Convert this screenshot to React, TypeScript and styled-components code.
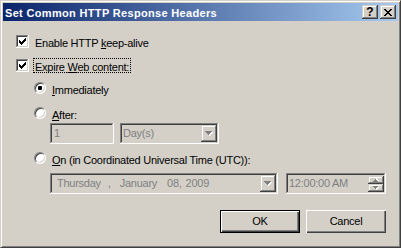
import React from 'react';
import styled, { createGlobalStyle } from 'styled-components';

const GlobalStyle = createGlobalStyle`
  html, body { margin: 0; padding: 0; background: #d4d0c8; }
  body { font-family: "Liberation Sans", Arial, sans-serif; font-size: 11px; }
`;

const raisedPush = `box-shadow: inset 1px 1px #fff, inset -1px -1px #404040, inset -2px -2px #808080;`;
const raisedSmall = `box-shadow: inset -1px -1px #404040, inset 1px 1px #d4d0c8, inset -2px -2px #808080, inset 2px 2px #fff;`;
const sunken = `box-shadow: inset -1px -1px #fff, inset 1px 1px #808080, inset -2px -2px #d4d0c8, inset 2px 2px #404040;`;

const Window = styled.div`
  box-sizing: border-box;
  width: 401px;
  height: 248px;
  background: #d4d0c8;
  border: 1px solid;
  border-color: #d4d0c8 #404040 #404040 #d4d0c8;
  box-shadow: inset 1px 1px #fff, inset -1px -1px #808080;
  padding: 2px;
  display: flex;
  flex-direction: column;
  font-family: "Liberation Sans", Arial, sans-serif;
  font-size: 11px;
  letter-spacing: -0.25px;
  color: #000;
`;

const TitleBar = styled.div`
  flex: none;
  height: 18px;
  display: flex;
  align-items: center;
  padding: 0 2px;
  background: linear-gradient(to right, #0a246a, #a6caf0);
`;

const Title = styled.div`
  flex: 1;
  box-sizing: border-box;
  height: 18px;
  padding-top: 1px;
  line-height: 18px;
  color: #fff;
  font-weight: bold;
  font-size: 11px;
  letter-spacing: 0.33px;
  white-space: nowrap;
`;

const CaptionButtons = styled.div`
  display: flex;
  gap: 2px;
`;

const CaptionButton = styled.div`
  box-sizing: border-box;
  width: 16px;
  height: 14px;
  background: #d4d0c8;
  ${raisedSmall}
  display: flex;
  align-items: center;
  justify-content: center;
  font-weight: bold;
  font-size: 12px;
  letter-spacing: 0;
  line-height: 14px;
  color: #000;
`;

const Body = styled.div`
  flex: 1;
  display: flex;
  flex-direction: column;
  padding: 0 12px 0 13px;
`;

const Row = styled.div<{ $top: number; $indent?: number; $h: number; $end?: boolean; $gap?: number }>`
  display: flex;
  align-items: center;
  height: ${p => p.$h}px;
  margin-top: ${p => p.$top}px;
  padding-left: ${p => p.$indent ?? 0}px;
  justify-content: ${p => (p.$end ? 'flex-end' : 'flex-start')};
  gap: ${p => p.$gap ?? 0}px;
`;

const CheckBox = styled.div`
  position: relative;
  flex: none;
  box-sizing: border-box;
  width: 13px;
  height: 13px;
  background: #fff;
  ${sunken}
  display: flex;
  align-items: center;
  justify-content: center;
`;

const Radio = styled.div`
  flex: none;
  box-sizing: border-box;
  width: 12px;
  height: 12px;
  border-radius: 50%;
  background: #fff;
  border: 1px solid;
  border-color: #808080 #fff #fff #808080;
  box-shadow: inset 1px 1px #404040, inset -1px -1px #d4d0c8;
  display: flex;
  align-items: center;
  justify-content: center;
`;

const RadioDot = styled.div`
  width: 4px;
  height: 4px;
  border-radius: 1px;
  background: #000;
`;

const Label = styled.div<{ $focus?: boolean }>`
  box-sizing: border-box;
  height: 15px;
  margin-left: 4px;
  padding: 2px 1px 0;
  line-height: 13px;
  border: 1px dotted ${p => (p.$focus ? '#000' : 'transparent')};
  white-space: nowrap;
`;

const Field = styled.div<{ $w: number; $pad: number }>`
  box-sizing: border-box;
  width: ${p => p.$w}px;
  height: 21px;
  background: #d4d0c8;
  ${sunken}
  display: flex;
  align-items: center;
  padding: 2px 2px 2px ${p => p.$pad}px;
  color: #808080;
  white-space: nowrap;
`;

const FieldText = styled.span`
  flex: 1;
  line-height: 13px;
`;

const DatePart = styled.span<{ $gap: number }>`
  margin-left: ${p => p.$gap}px;
  line-height: 13px;
`;

const DropButton = styled.div`
  flex: none;
  margin-left: auto;
  box-sizing: border-box;
  width: 16px;
  height: 17px;
  background: #d4d0c8;
  ${raisedSmall}
  display: flex;
  align-items: center;
  justify-content: center;
`;

const Spin = styled.div`
  flex: none;
  margin-left: auto;
  display: flex;
  flex-direction: column;
`;

const SpinButton = styled.div`
  box-sizing: border-box;
  width: 16px;
  height: 8px;
  background: #d4d0c8;
  ${raisedSmall}
  display: flex;
  align-items: center;
  justify-content: center;
`;

const PushButton = styled.div<{ $default?: boolean }>`
  box-sizing: border-box;
  width: 80px;
  height: 23px;
  background: #d4d0c8;
  border: 1px solid ${p => (p.$default ? '#000' : 'transparent')};
  ${p => (p.$default ? raisedPush : '')}
  ${p => (p.$default ? '' : 'border: none;')}
  ${p => (p.$default ? '' : raisedPush)}
  display: flex;
  align-items: center;
  justify-content: center;
  line-height: 13px;
`;

const CheckMark = () => (
  <svg width="7" height="7" viewBox="0 0 7 7" shapeRendering="crispEdges">
    <rect x="0" y="2" width="1" height="3" fill="#000" />
    <rect x="1" y="3" width="1" height="3" fill="#000" />
    <rect x="2" y="4" width="1" height="3" fill="#000" />
    <rect x="3" y="3" width="1" height="3" fill="#000" />
    <rect x="4" y="2" width="1" height="3" fill="#000" />
    <rect x="5" y="1" width="1" height="3" fill="#000" />
    <rect x="6" y="0" width="1" height="3" fill="#000" />
  </svg>
);

const CloseGlyph = () => (
  <svg width="8" height="7" viewBox="0 0 8 7" shapeRendering="crispEdges">
    <rect x="0" y="0" width="2" height="1" fill="#000" />
    <rect x="6" y="0" width="2" height="1" fill="#000" />
    <rect x="1" y="1" width="2" height="1" fill="#000" />
    <rect x="5" y="1" width="2" height="1" fill="#000" />
    <rect x="2" y="2" width="4" height="1" fill="#000" />
    <rect x="3" y="3" width="2" height="1" fill="#000" />
    <rect x="2" y="4" width="4" height="1" fill="#000" />
    <rect x="1" y="5" width="2" height="1" fill="#000" />
    <rect x="5" y="5" width="2" height="1" fill="#000" />
    <rect x="0" y="6" width="2" height="1" fill="#000" />
    <rect x="6" y="6" width="2" height="1" fill="#000" />
  </svg>
);

const DownArrow = () => (
  <svg width="8" height="5" viewBox="0 0 8 5" shapeRendering="crispEdges">
    <g fill="#fff">
      <rect x="1" y="1" width="7" height="1" />
      <rect x="2" y="2" width="5" height="1" />
      <rect x="3" y="3" width="3" height="1" />
      <rect x="4" y="4" width="1" height="1" />
    </g>
    <g fill="#808080">
      <rect x="0" y="0" width="7" height="1" />
      <rect x="1" y="1" width="5" height="1" />
      <rect x="2" y="2" width="3" height="1" />
      <rect x="3" y="3" width="1" height="1" />
    </g>
  </svg>
);

const SmallArrow = ({ up }: { up?: boolean }) => (
  <svg width="6" height="4" viewBox="0 0 6 4" shapeRendering="crispEdges" style={up ? { transform: 'scaleY(-1)' } : undefined}>
    <g fill="#fff">
      <rect x="1" y="1" width="5" height="1" />
      <rect x="2" y="2" width="3" height="1" />
      <rect x="3" y="3" width="1" height="1" />
    </g>
    <g fill="#808080">
      <rect x="0" y="0" width="5" height="1" />
      <rect x="1" y="1" width="3" height="1" />
      <rect x="2" y="2" width="1" height="1" />
    </g>
  </svg>
);

export default function App() {
  return (
    <>
      <GlobalStyle />
      <Window>
        <TitleBar>
          <Title>Set Common HTTP Response Headers</Title>
          <CaptionButtons>
            <CaptionButton>?</CaptionButton>
            <CaptionButton>
              <CloseGlyph />
            </CaptionButton>
          </CaptionButtons>
        </TitleBar>
        <Body>
          <Row $top={14} $h={13}>
            <CheckBox>
              <CheckMark />
            </CheckBox>
            <Label>
              Enable HTTP <u>k</u>eep-alive
            </Label>
          </Row>
          <Row $top={11} $h={13}>
            <CheckBox>
              <CheckMark />
            </CheckBox>
            <Label $focus>
              Expire <u>W</u>eb content:
            </Label>
          </Row>
          <Row $top={10} $h={12} $indent={18}>
            <Radio>
              <RadioDot />
            </Radio>
            <Label>
              <u>I</u>mmediately
            </Label>
          </Row>
          <Row $top={13} $h={12} $indent={18}>
            <Radio />
            <Label>
              <u>A</u>fter:
            </Label>
          </Row>
          <Row $top={4} $h={21} $indent={34} $gap={6}>
            <Field $w={64} $pad={4}>
              <FieldText>1</FieldText>
            </Field>
            <Field $w={99} $pad={3}>
              <FieldText>Day(s)</FieldText>
              <DropButton>
                <DownArrow />
              </DropButton>
            </Field>
          </Row>
          <Row $top={8} $h={12} $indent={18}>
            <Radio />
            <Label>
              <u>O</u>n (in Coordinated Universal Time (UTC)):
            </Label>
          </Row>
          <Row $top={9} $h={21} $indent={34} $gap={8}>
            <Field $w={228} $pad={7}>
              <DatePart $gap={0}>Thursday</DatePart>
              <DatePart $gap={7}>,</DatePart>
              <DatePart $gap={9}>January</DatePart>
              <DatePart $gap={10}>08,</DatePart>
              <DatePart $gap={4}>2009</DatePart>
              <DropButton>
                <DownArrow />
              </DropButton>
            </Field>
            <Field $w={100} $pad={3}>
              <FieldText>12:00:00 AM</FieldText>
              <Spin>
                <SpinButton>
                  <SmallArrow up />
                </SpinButton>
                <SpinButton>
                  <SmallArrow />
                </SpinButton>
              </Spin>
            </Field>
          </Row>
          <Row $top={16} $h={23} $end $gap={6}>
            <PushButton $default>OK</PushButton>
            <PushButton>Cancel</PushButton>
          </Row>
        </Body>
      </Window>
    </>
  );
}
